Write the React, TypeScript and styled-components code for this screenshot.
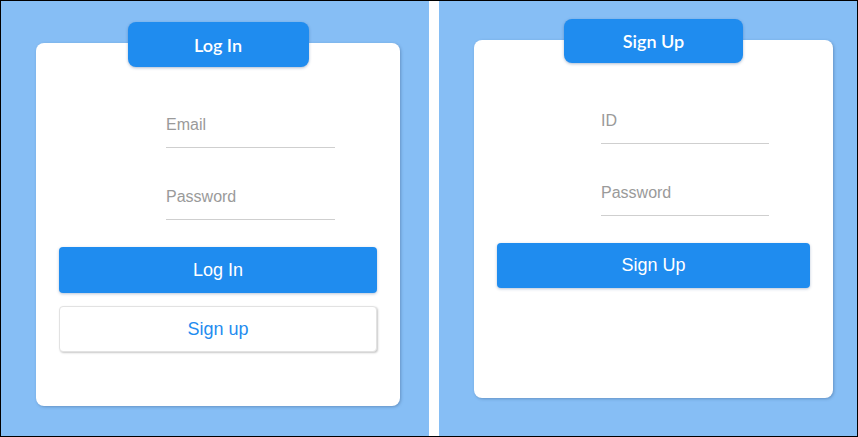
import styled, { createGlobalStyle } from 'styled-components';

const BLUE = '#1f8cef';
const SKY = '#86bef5';

const GlobalStyle = createGlobalStyle`
  html, body {
    margin: 0;
    padding: 0;
    background: #fff;
  }
  * {
    box-sizing: border-box;
  }
`;

type PanelProps = {
  $width: number;
  $top: number;
};

type CardProps = {
  $width: number;
  $height: number;
};

type TabProps = {
  $width: number;
  $height: number;
};

type FieldsProps = {
  $indent: number;
};

type InputProps = {
  $width: number;
};

type ActionButtonProps = {
  $variant: 'primary' | 'outline';
  $height: number;
};

function App() {
  return (
    <>
      <GlobalStyle />
      <Frame>
        <Panel $width={428} $top={42}>
          <Card $width={364} $height={363}>
            <Tab $width={181} $height={45}>Log In</Tab>
            <Fields $indent={107}>
              <Field $width={169} placeholder="Email" />
              <Field $width={169} type="password" placeholder="Password" />
            </Fields>
            <Actions>
              <ActionButton $variant="primary" $height={46}>
                Log In
              </ActionButton>
              <ActionButton $variant="outline" $height={46}>
                Sign up
              </ActionButton>
            </Actions>
          </Card>
        </Panel>
        <Divider />
        <Panel $width={418} $top={39}>
          <Card $width={359} $height={358}>
            <Tab $width={179} $height={44}>Sign Up</Tab>
            <Fields $indent={104}>
              <Field $width={168} placeholder="ID" />
              <Field $width={168} type="password" placeholder="Password" />
            </Fields>
            <Actions>
              <ActionButton $variant="primary" $height={45}>
                Sign Up
              </ActionButton>
            </Actions>
          </Card>
        </Panel>
      </Frame>
    </>
  );
}

export default App;

const Frame = styled.div`
  display: flex;
  width: 858px;
  height: 437px;
  border: 1px solid #000;
  background: #fff;
`;

const Panel = styled.section<PanelProps>`
  width: ${({ $width }) => $width}px;
  height: 100%;
  padding: ${({ $top }) => $top}px 0 0 35px;
  background: ${SKY};
`;

const Divider = styled.div`
  width: 10px;
  background: #fff;
`;

const Card = styled.div<CardProps>`
  display: flex;
  flex-direction: column;
  width: ${({ $width }) => $width}px;
  height: ${({ $height }) => $height}px;
  padding: 0 23px;
  background: #fff;
  border-radius: 8px;
  box-shadow: 1px 1px 3px rgba(40, 70, 110, 0.35);
`;

const Tab = styled.div<TabProps>`
  display: flex;
  align-items: center;
  justify-content: center;
  align-self: center;
  width: ${({ $width }) => $width}px;
  height: ${({ $height }) => $height}px;
  margin-top: -21px;
  background: ${BLUE};
  border-radius: 8px;
  box-shadow: 0 1px 3px rgba(20, 60, 120, 0.35);
  color: #fff;
  font-family: Lato, 'Open Sans', sans-serif;
  font-size: 18px;
  font-weight: 600;
`;

const Fields = styled.div<FieldsProps>`
  display: flex;
  flex-direction: column;
  gap: 36px;
  margin-top: 45px;
  padding-left: ${({ $indent }) => $indent}px;
`;

const Field = styled.input<InputProps>`
  width: ${({ $width }) => $width}px;
  height: 36px;
  padding: 0 0 10px;
  border: none;
  border-bottom: 1px solid #cfcfcf;
  outline: none;
  background: transparent;
  font-family: 'Liberation Sans', Arial, sans-serif;
  font-size: 16px;
  color: #333;

  &::placeholder {
    color: #9a9a9a;
  }
`;

const Actions = styled.div`
  display: flex;
  flex-direction: column;
  gap: 13px;
  margin-top: 27px;
`;

const ActionButton = styled.button<ActionButtonProps>`
  width: 100%;
  height: ${({ $height }) => $height}px;
  border-radius: 4px;
  font-family: 'Liberation Sans', Arial, sans-serif;
  font-size: 18px;
  cursor: pointer;
  border: ${({ $variant }) => ($variant === 'primary' ? 'none' : '1px solid #e2e2e2')};
  background: ${({ $variant }) => ($variant === 'primary' ? BLUE : '#fff')};
  color: ${({ $variant }) => ($variant === 'primary' ? '#fff' : BLUE)};
  box-shadow: ${({ $variant }) =>
    $variant === 'primary' ? '0 1px 3px rgba(20, 60, 120, 0.3)' : '1px 1px 2px rgba(0, 0, 0, 0.22)'};
`;
